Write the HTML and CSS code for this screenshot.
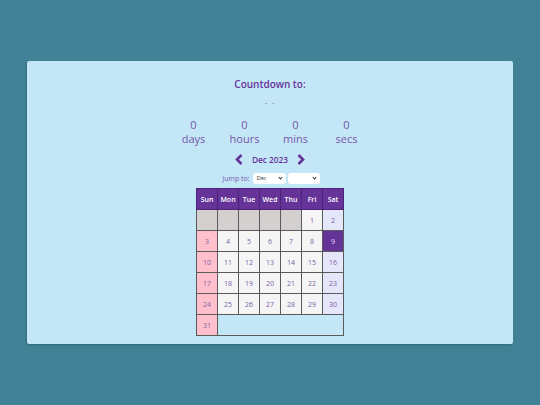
FILE: index.html
```html
<!DOCTYPE html>
<html lang="en">
<head>
  <meta charset="UTF-8" />
  <title>Countdown</title>
  <link rel="stylesheet" href="styles.css">
</head>
<body>
  <div class="panel">
    <h1 class="title">Countdown to:</h1>
    <div class="target">- -</div>

    <div class="counter">
      <div class="unit"><span class="num">0</span><span class="label">days</span></div>
      <div class="unit"><span class="num">0</span><span class="label">hours</span></div>
      <div class="unit"><span class="num">0</span><span class="label">mins</span></div>
      <div class="unit"><span class="num">0</span><span class="label">secs</span></div>
    </div>

    <div class="month-nav">
      <button class="nav-btn" aria-label="Previous month">
        <svg width="8" height="11" viewBox="0 0 8 11"><path d="M6.5 1 L2 5.5 L6.5 10" fill="none" stroke="currentColor" stroke-width="2.6"/></svg>
      </button>
      <span class="month-label">Dec 2023</span>
      <button class="nav-btn" aria-label="Next month">
        <svg width="8" height="11" viewBox="0 0 8 11"><path d="M1.5 1 L6 5.5 L1.5 10" fill="none" stroke="currentColor" stroke-width="2.6"/></svg>
      </button>
    </div>

    <div class="jump">
      <span class="jump-label">Jump to:</span>
      <div class="select month-select">Dec<span class="caret"></span></div>
      <div class="select year-select"><span class="caret"></span></div>
    </div>

    <table class="calendar">
      <thead>
        <tr><th>Sun</th><th>Mon</th><th>Tue</th><th>Wed</th><th>Thu</th><th>Fri</th><th>Sat</th></tr>
      </thead>
      <tbody>
        <tr><td class="blank"></td><td class="blank"></td><td class="blank"></td><td class="blank"></td><td class="blank"></td><td>1</td><td class="sat">2</td></tr>
        <tr><td class="sun">3</td><td>4</td><td>5</td><td>6</td><td>7</td><td>8</td><td class="today">9</td></tr>
        <tr><td class="sun">10</td><td>11</td><td>12</td><td>13</td><td>14</td><td>15</td><td class="sat">16</td></tr>
        <tr><td class="sun">17</td><td>18</td><td>19</td><td>20</td><td>21</td><td>22</td><td class="sat">23</td></tr>
        <tr><td class="sun">24</td><td>25</td><td>26</td><td>27</td><td>28</td><td>29</td><td class="sat">30</td></tr>
        <tr><td class="sun">31</td><td class="rest" colspan="6"></td></tr>
      </tbody>
    </table>
  </div>
</body>
</html>
```

FILE: styles.css
```css
:root {
  --bg: #418297;
  --panel: #c4e7f8;
  --purple: #663399;
  --text: #7456a8;
  --cell-text: #7b62a8;
}

body {
  margin: 0;
  height: 100vh;
  display: flex;
  align-items: center;
  justify-content: center;
  background: var(--bg);
  font-family: 'Open Sans', 'Noto Sans', sans-serif;
  color: var(--text);
}

.panel {
  width: 90%;
  background: var(--panel);
  border-radius: 2px;
  box-shadow: -1px 1px 2px rgba(0, 0, 0, 0.2);
  padding: 15px 0 8px;
  text-align: center;
}

.title {
  margin: 0;
  font-size: 10px;
  line-height: 16px;
  font-weight: 600;
  color: var(--purple);
}

.target {
  margin-top: 5px;
  font-size: 9px;
  line-height: 12px;
  color: #8a9bb0;
  letter-spacing: 1px;
}

.counter {
  display: flex;
  justify-content: center;
  margin-top: 9px;
}

.unit {
  width: 51px;
  display: flex;
  flex-direction: column;
  font-size: 11px;
  line-height: 14px;
}

.month-nav {
  display: flex;
  align-items: center;
  justify-content: center;
  gap: 9px;
  margin-top: 6px;
  height: 14px;
}

.nav-btn {
  background: none;
  border: none;
  padding: 0;
  color: var(--purple);
  display: flex;
}

.month-label {
  font-size: 8.3px;
  font-weight: 600;
  color: var(--purple);
}

.jump {
  display: flex;
  align-items: center;
  justify-content: center;
  gap: 2px;
  margin-top: 7px;
  height: 11px;
  padding-left: 2px;
}

.jump-label {
  font-size: 7px;
  margin-right: 1px;
}

.select {
  position: relative;
  height: 11px;
  background: #fff;
  border-radius: 3px;
  font-size: 5.5px;
  line-height: 11px;
  text-align: left;
  padding-left: 4px;
  box-sizing: border-box;
  color: #333;
}

.month-select { width: 33px; }
.year-select { width: 32px; }

.caret {
  position: absolute;
  right: 4px;
  top: 3px;
  width: 2px;
  height: 2px;
  border-right: 1px solid #333;
  border-bottom: 1px solid #333;
  transform: rotate(45deg);
}

.calendar {
  margin: 4px auto 0;
  border-collapse: collapse;
  font-size: 7px;
}

.calendar th,
.calendar td {
  width: 20px;
  height: 20px;
  padding: 0;
  border: 1px solid #5a5a5a;
  text-align: center;
  background: #f5f5f5;
  color: var(--cell-text);
}

.calendar th {
  background: var(--purple);
  color: #fff;
  font-weight: 600;
  border-color: #4d2378;
}

.calendar td.blank { background: #d4d0d0; }
.calendar td.sun { background: #ffc0cb; }
.calendar td.sat { background: #e6e6fa; }
.calendar td.today { background: var(--purple); color: #e9ddf5; }
.calendar td.rest { background: transparent; }
```
